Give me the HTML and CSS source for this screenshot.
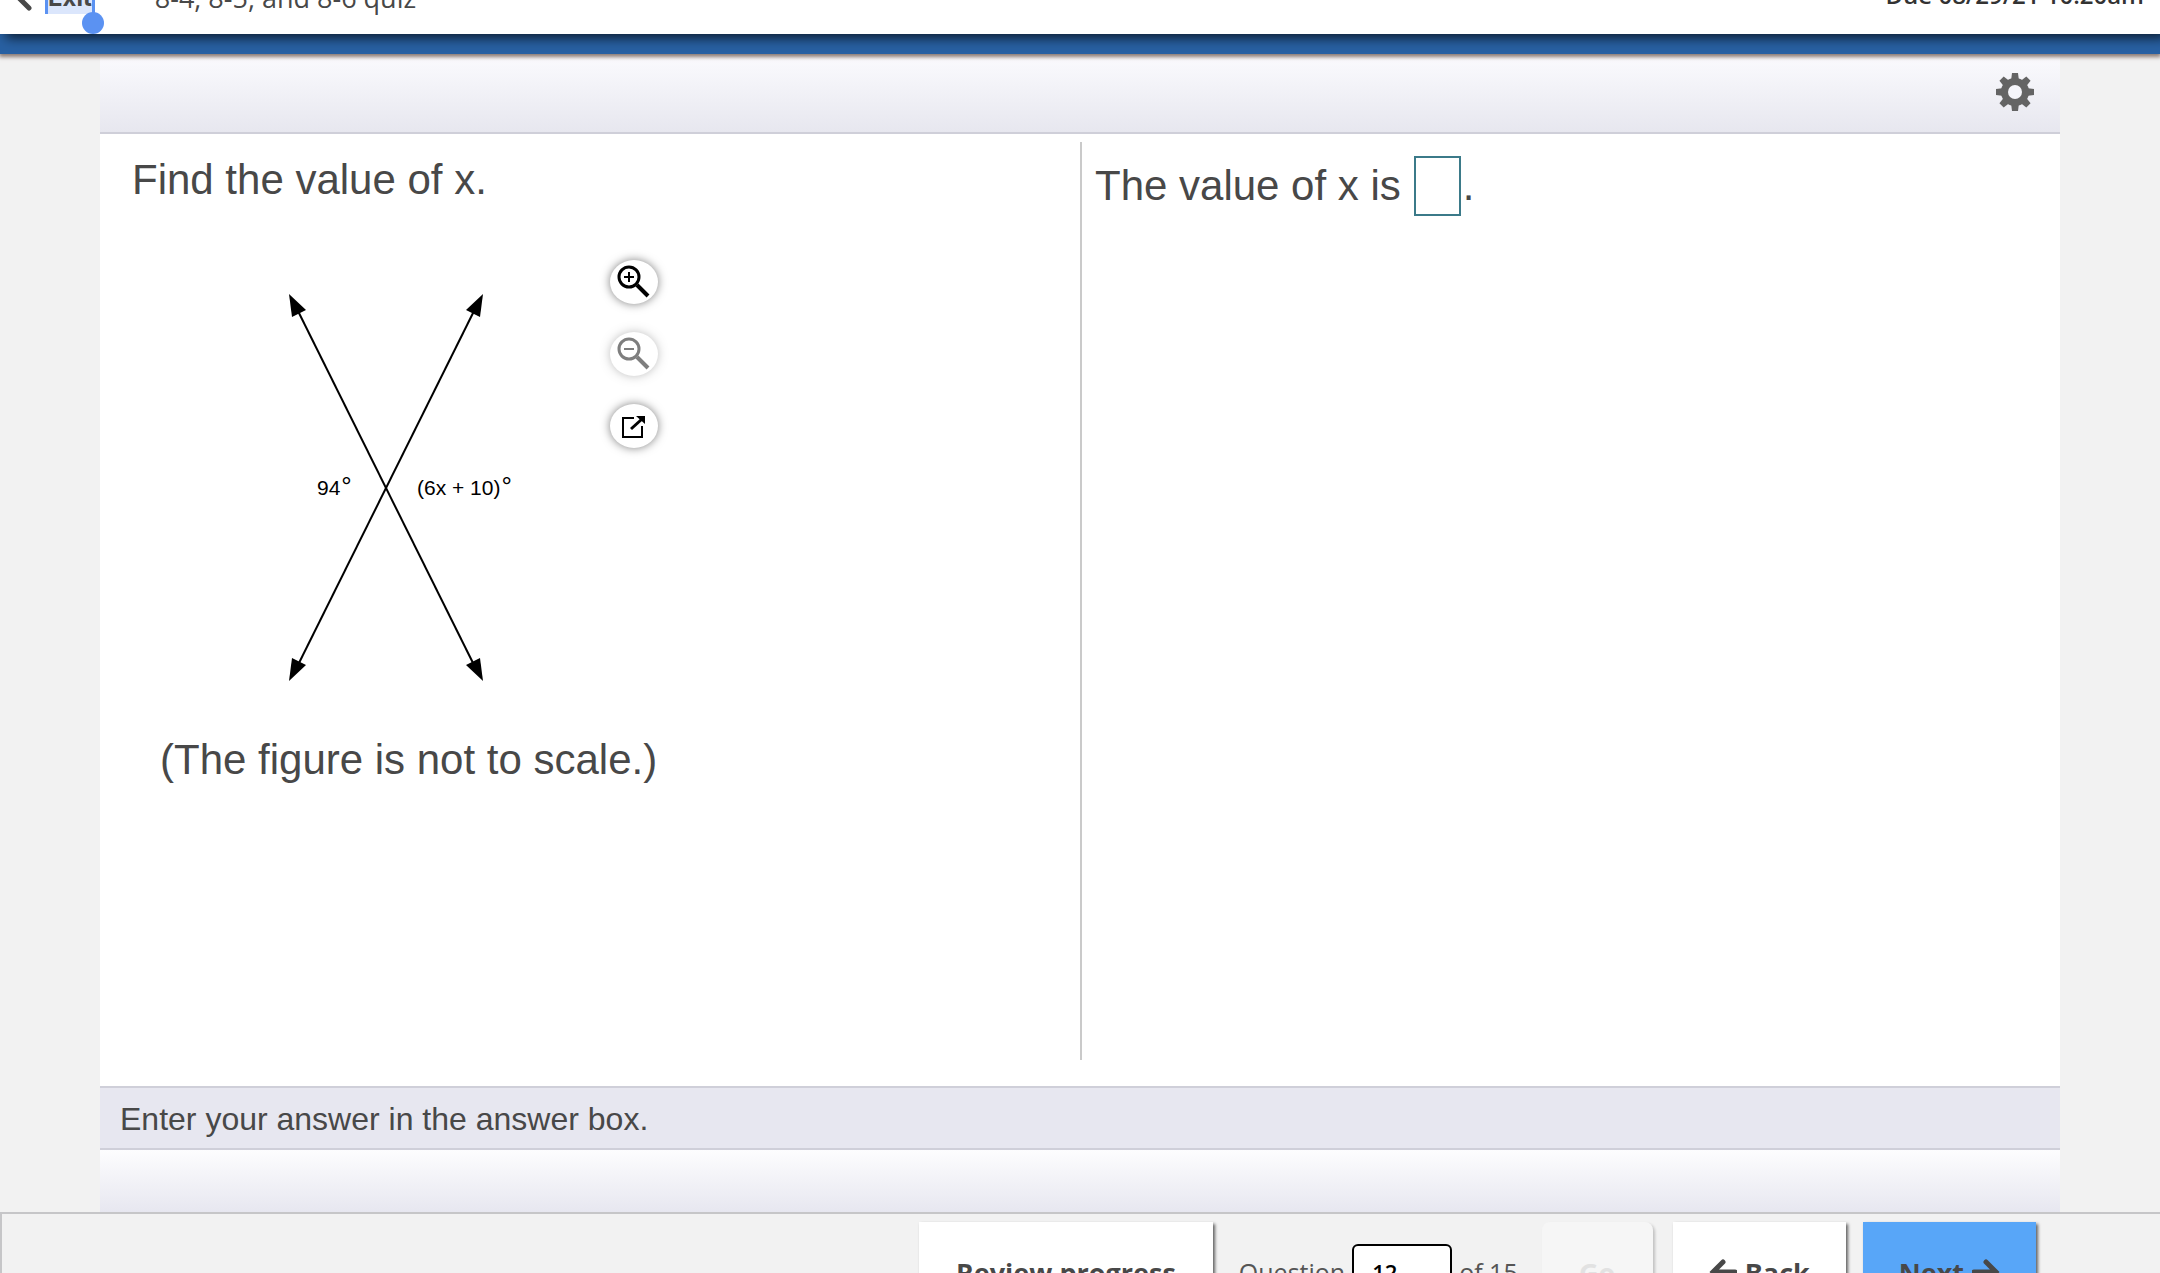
FILE: index.html
```
<!DOCTYPE html>
<html lang="en">

<head>
    <meta charset="UTF-8">
    <meta name="viewport" content="width=device-width, initial-scale=1.0">
    <title>8-4, 8-5, and 8-6 quiz</title>
    <link rel="stylesheet" href="styles.css">
</head>

<body>
    <header class="top-bar">
        <a class="exit-link" href="#">
            <svg class="exit-icon" viewBox="0 0 16 26" width="16" height="26" aria-hidden="true">
                <path d="M13 3L3 13L13 23" />
            </svg>
            <span class="exit-text">Exit<span class="selection-handle"></span></span>
        </a>
        <span class="quiz-title">8-4, 8-5, and 8-6 quiz</span>
        <span class="due-date">Due 08/29/21 10:20am</span>
    </header>
    <div class="blue-bar"></div>

    <main class="player">
        <div class="toolbar">
            <button class="settings-button" aria-label="Settings">
                <svg viewBox="-20 -20 40 40" width="40" height="40">
                    <g class="gear-teeth">
                        <path id="tooth" d="M-4 -11L-3 -19H3L4 -11V11L3 19H-3L-4 11Z" />
                        <use href="#tooth" transform="rotate(45)" />
                        <use href="#tooth" transform="rotate(90)" />
                        <use href="#tooth" transform="rotate(135)" />
                        <circle r="14" />
                    </g>
                    <circle class="gear-hole" r="7" />
                </svg>
            </button>
        </div>

        <div class="exercise">
            <section class="question">
                <p class="prompt">Find the value of x.</p>
                <div class="figure-row">
                    <svg class="figure" viewBox="0 0 280 430" width="280" height="430" role="img" aria-label="Two intersecting lines">
                        <g class="figure-lines">
                            <path d="M35 35L217 401" />
                            <path d="M217 35L35 401" />
                        </g>
                        <path d="M29 24L46 40L32 47Z" />
                        <path d="M223 24L206 40L220 47Z" />
                        <path d="M29 411L46 395L32 388Z" />
                        <path d="M223 411L206 395L220 388Z" />
                        <text x="57" y="225">94<tspan class="degree" dx="1">°</tspan></text>
                        <text x="157" y="225">(6x + 10)<tspan class="degree" dx="1">°</tspan></text>
                    </svg>
                    <div class="figure-tools">
                        <button class="tool-button" aria-label="Zoom in">
                            <svg viewBox="0 0 34 34" width="34" height="34">
                                <circle cx="12" cy="12" r="10" />
                                <path class="thin" d="M7 12H17M12 7V17" />
                                <path class="handle" d="M20 20L31 31" />
                            </svg>
                        </button>
                        <button class="tool-button faded" aria-label="Zoom out">
                            <svg viewBox="0 0 34 34" width="34" height="34">
                                <circle cx="12" cy="12" r="10" />
                                <path class="thin" d="M7 12H17" />
                                <path class="handle" d="M20 20L31 31" />
                            </svg>
                        </button>
                        <button class="tool-button" aria-label="Open in new window">
                            <svg viewBox="0 0 34 34" width="34" height="34">
                                <path class="thin" d="M17 9H6V28H25V17" />
                                <path class="arrow" d="M14 20L25 10" />
                                <path class="arrow-head" d="M19 7H28V15Z" />
                            </svg>
                        </button>
                    </div>
                </div>
                <p class="note">(The figure is not to scale.)</p>
            </section>
            <section class="answer">
                <div class="answer-line">
                    <label for="answer">The value of x is</label>
                    <input class="answer-box" type="text" id="answer">
                    <span>.</span>
                </div>
            </section>
        </div>

        <div class="hint">Enter your answer in the answer box.</div>
        <div class="bottom-strip"></div>
    </main>

    <footer class="nav-bar">
        <button class="nav-button review">Review progress</button>
        <div class="jump">
            <label for="questionNumber">Question</label>
            <input type="text" id="questionNumber" value="12">
            <span>of 15</span>
        </div>
        <button class="nav-button go" disabled>Go</button>
        <button class="nav-button back">
            <svg viewBox="0 0 28 26" width="28" height="26" aria-hidden="true">
                <path d="M14 3L4 13L14 23M4 13H26" />
            </svg>
            Back
        </button>
        <button class="nav-button next">
            Next
            <svg viewBox="0 0 28 26" width="28" height="26" aria-hidden="true">
                <path d="M14 3L24 13L14 23M24 13H2" />
            </svg>
        </button>
    </footer>
</body>

</html>
```
FILE: styles.css
```
:root {
    --page-color: #f2f2f2;
    --text-color: #484848;
    --line-color: #cfcfd9;
    --select-color: #5b92f2;
}

* {
    box-sizing: border-box;
}

body {
    display: flex;
    flex-direction: column;
    height: 100vh;
    margin: 0;
    overflow: hidden;
    background-color: var(--page-color);
    color: var(--text-color);
    font-family: "Liberation Sans", Arial, sans-serif;
}

button {
    border: none;
    cursor: pointer;
}

/* header, scrolled mostly out of view */
.top-bar {
    position: relative;
    z-index: 2;
    display: flex;
    align-items: flex-end;
    flex-shrink: 0;
    height: 34px;
    padding: 0 16px 20px;
    background-color: #fff;
    box-shadow: 6px 4px 12px rgba(0, 0, 0, 0.7);
    font-family: "Open Sans", sans-serif;
    font-size: 24px;
    line-height: 32px;
}

.exit-link {
    display: flex;
    align-items: center;
    gap: 13px;
    color: var(--text-color);
    font-family: Inter, sans-serif;
    font-size: 24px;
    font-weight: bold;
    text-decoration: none;
}

.exit-icon {
    fill: none;
    stroke: var(--text-color);
    stroke-width: 5;
    stroke-linecap: round;
}

.exit-text {
    position: relative;
    border-left: 3px solid var(--select-color);
    border-right: 3px solid var(--select-color);
    background-color: #dbe6fc;
}

.selection-handle {
    position: absolute;
    right: -12px;
    bottom: -20px;
    width: 22px;
    height: 22px;
    border-radius: 50%;
    background-color: var(--select-color);
}

.quiz-title {
    margin-left: 60px;
    font-size: 27px;
}

.due-date {
    margin-left: auto;
    padding-bottom: 3px;
    color: #333;
    font-weight: 600;
}

.blue-bar {
    position: relative;
    z-index: 1;
    flex-shrink: 0;
    height: 20px;
    background-color: #2860a2;
    box-shadow: 0 2px 4px 1px #8a7a74;
}

.player {
    display: flex;
    flex-direction: column;
    flex: 1;
    margin: 0 100px;
    background-color: #fff;
}

.toolbar {
    display: flex;
    align-items: center;
    justify-content: flex-end;
    height: 80px;
    padding: 0 25px 2px;
    border-bottom: 2px solid var(--line-color);
    background: linear-gradient(#fbfbfe, #e7e7ef);
}

.settings-button {
    display: flex;
    padding: 0;
    background: none;
}

.gear-teeth {
    fill: #646464;
}

.gear-hole {
    fill: #f5f5fa;
}

.exercise {
    display: flex;
    flex: 1;
    padding: 8px 0 26px;
    font-size: 42px;
    line-height: 48px;
}

.question {
    width: 50%;
    padding: 14px 32px;
}

.prompt,
.note {
    margin: 0;
}

.figure-row {
    display: flex;
    padding: 56px 0 36px 128px;
}

.figure {
    margin-top: 10px;
    font-size: 21px;
    fill: #000;
}

.figure-lines {
    fill: none;
    stroke: #000;
    stroke-width: 2;
}

.degree {
    font-size: 26px;
}

.figure-tools {
    display: flex;
    flex-direction: column;
    gap: 28px;
    padding-left: 70px;
}

.tool-button {
    display: flex;
    align-items: center;
    justify-content: center;
    width: 48px;
    height: 44px;
    padding: 0;
    border-radius: 50%;
    background-color: #fff;
    box-shadow: 0 0 10px rgba(0, 0, 0, 0.5);
}

.tool-button svg {
    fill: none;
    stroke: #000;
    stroke-width: 3;
}

.tool-button .thin {
    stroke-width: 2;
}

.tool-button .handle {
    stroke-width: 4;
}

.tool-button .arrow-head {
    fill: #000;
    stroke: none;
}

.faded {
    opacity: 0.5;
}

.note {
    padding-left: 28px;
}

.answer {
    width: 50%;
    padding: 14px 13px;
    border-left: 2px solid #cacaca;
}

.answer-line {
    display: flex;
    align-items: center;
}

.answer-box {
    width: 47px;
    height: 60px;
    margin: 0 2px 0 13px;
    border: 2px solid #3b7a89;
    font-size: 42px;
}

.hint {
    height: 64px;
    padding: 0 20px;
    border-top: 2px solid var(--line-color);
    border-bottom: 2px solid var(--line-color);
    background-color: #e7e7f0;
    font-size: 32px;
    line-height: 62px;
}

.bottom-strip {
    height: 62px;
    background: linear-gradient(#fdfdfe, #e7e7f0);
}

/* bottom navigation, runs past the window edge */
.nav-bar {
    display: flex;
    align-items: flex-start;
    justify-content: flex-end;
    flex-shrink: 0;
    height: 61px;
    padding: 8px 124px 0 0;
    border-top: 2px solid #c6c6c8;
    border-left: 2px solid #c6c6c8;
    overflow: hidden;
    font-family: "Open Sans", sans-serif;
    font-size: 25px;
}

.nav-button {
    display: flex;
    align-items: center;
    justify-content: center;
    gap: 8px;
    height: 100px;
    padding: 0 36px;
    background-color: #fff;
    box-shadow: 2px 2px 3px rgba(0, 0, 0, 0.6);
    color: var(--text-color);
    font-family: inherit;
    font-size: 27px;
    font-weight: bold;
}

.nav-button svg {
    fill: none;
    stroke: var(--text-color);
    stroke-width: 5;
    stroke-linecap: round;
}

.review {
    padding: 0 37px;
}

.jump {
    display: flex;
    align-items: center;
    gap: 7px;
    height: 100px;
    margin: 0 24px 0 26px;
    color: #555;
}

.jump input {
    width: 100px;
    height: 56px;
    padding: 0 18px;
    border: 2px solid #000;
    border-radius: 6px;
    background-color: #fff;
    font-family: inherit;
    font-size: 22px;
    font-weight: 600;
}

.go {
    width: 111px;
    border-radius: 8px;
    background-color: #f6f6f6;
    box-shadow: 2px 2px 3px rgba(0, 0, 0, 0.2);
    color: #e2e2e2;
}

.back {
    margin: 0 17px 0 20px;
}

.next {
    background-color: #58a6f8;
}
```
